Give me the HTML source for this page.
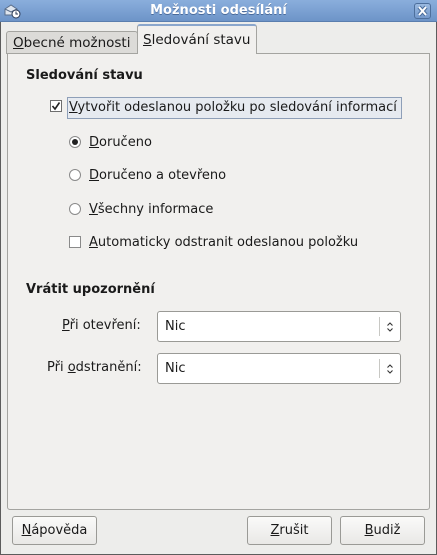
<!DOCTYPE html>
<html><head><meta charset="utf-8"><style>
*{margin:0;padding:0;box-sizing:border-box}
body{width:437px;height:555px;overflow:hidden;background:#ededeb;font-family:"DejaVu Sans","Liberation Sans",sans-serif;font-size:13px;color:#1a1a1a;position:relative}
.a{position:absolute}
.win{left:0;top:0;width:437px;height:555px;border:1px solid #5c5c5c;border-top:none}
.title{left:0;top:0;width:437px;height:22px;background:linear-gradient(#8aaedc,#6d94c8);border-bottom:1px solid #5a7eae;color:#fff;font-weight:bold;text-align:center;line-height:22px;font-size:13px;text-shadow:0 1px 0 #4a6a9a}
.close{left:414px;top:3px;width:17px;height:16px;border:1px solid #4d6f9c;border-radius:3px;background:linear-gradient(#9ab9e0,#7499cc)}
.panel{left:7px;top:53px;width:423px;height:457px;border:1px solid #a4a4a0;border-radius:0 0 3px 3px;background:#f1f0ee}
.tab1{left:6px;top:31px;width:132px;height:23px;border:1px solid #a4a4a0;border-bottom:none;border-radius:3px 3px 0 0;background:#dcdbd8;padding:3px 0 0 6px;font-size:13.5px}
.tab2{left:137px;top:24px;width:120px;height:30px;border:1px solid #a4a4a0;border-top:2px solid #8aa6cc;border-bottom:none;border-radius:3px 3px 0 0;background:#f1f0ee;padding:6px 0 0 5px;font-size:13.5px}
u{text-decoration:underline}
.b{font-weight:bold}
.cb{width:12px;height:12px;border:1px solid #6e6e6e;background:#fff}
.rb{width:12px;height:12px;border:1px solid #8a8a8a;border-radius:50%;background:#fff}
.combo{width:244px;height:31px;border:1px solid #9a9a96;border-radius:3px;background:#fff;padding:7px 0 0 7px}
.combo .sep{position:absolute;right:20px;top:5px;width:1px;height:19px;background:#c8c8c4}
.combo svg{position:absolute;right:6px;top:9px}
.btn{height:29px;border:1px solid #9a9a96;border-radius:3px;background:linear-gradient(#fafaf9,#e9e8e6);text-align:center;line-height:27px}
</style></head><body>
<div class="a win"></div>
<div class="a title">Možnosti odesílání</div>
<svg class="a" style="left:3px;top:3px" width="18" height="16" viewBox="0 0 18 16"><path d="M2 6 L8 2 L14 6 V12 H2Z" fill="#dfe6ef" stroke="#5a6e8a"/><path d="M2 6 L8 9 L14 6" fill="none" stroke="#5a6e8a"/><circle cx="13" cy="11" r="4" fill="#fff" stroke="#2a3a55"/><path d="M13 8.5V11H15" stroke="#2a3a55" fill="none"/></svg>
<div class="a close"><svg width="15" height="14" viewBox="0 0 15 14"><path d="M4 3 L11 11 M11 3 L4 11" stroke="#4d6f9c" stroke-width="4"/><path d="M4 3 L11 11 M11 3 L4 11" stroke="#fff" stroke-width="2"/></svg></div>
<div class="a tab1"><u>O</u>becné možnosti</div>
<div class="a panel"></div>
<div class="a tab2"><u>S</u>ledování stavu</div>
<div class="a b" style="left:26px;top:68px">Sledování stavu</div>
<div class="a cb" style="left:50px;top:100px"><svg width="10" height="10" viewBox="0 0 10 10" style="display:block"><path d="M1.5 5 L4 8 L8.5 1.5" stroke="#222" stroke-width="1.6" fill="none"/></svg></div>
<div class="a" style="left:67px;top:97px;width:335px;height:22px;border:1px solid #8e9fb8;background:#e6eaf0;padding:2px 0 0 1px"><u>V</u>ytvořit odeslanou položku po sledování informací</div>
<div class="a rb" style="left:69px;top:136px"><div style="width:6px;height:6px;margin:2px;border-radius:50%;background:#222"></div></div>
<div class="a" style="left:89px;top:135px"><u>D</u>oručeno</div>
<div class="a rb" style="left:69px;top:169px"></div>
<div class="a" style="left:89px;top:168px"><u>D</u>oručeno a otevřeno</div>
<div class="a rb" style="left:69px;top:203px"></div>
<div class="a" style="left:89px;top:202px"><u>V</u>šechny informace</div>
<div class="a cb" style="left:69px;top:236px;border-color:#8a8a8a"></div>
<div class="a" style="left:89px;top:235px"><u>A</u>utomaticky odstranit odeslanou položku</div>
<div class="a b" style="left:26px;top:282px">Vrátit upozornění</div>
<div class="a" style="left:62px;top:318px"><u>P</u>ři otevření:</div>
<div class="a combo" style="left:157px;top:311px">Nic<div class="sep"></div><svg width="8" height="12" viewBox="0 0 8 12"><path d="M1.5 4.5 L4 2 L6.5 4.5 M1.5 7.5 L4 10 L6.5 7.5" stroke="#333" stroke-width="1.1" fill="none"/></svg></div>
<div class="a" style="left:47px;top:360px">Při <u>o</u>dstranění:</div>
<div class="a combo" style="left:157px;top:353px">Nic<div class="sep"></div><svg width="8" height="12" viewBox="0 0 8 12"><path d="M1.5 4.5 L4 2 L6.5 4.5 M1.5 7.5 L4 10 L6.5 7.5" stroke="#333" stroke-width="1.1" fill="none"/></svg></div>
<div class="a btn" style="left:12px;top:516px;width:85px"><u>N</u>ápověda</div>
<div class="a btn" style="left:247px;top:516px;width:85px"><u>Z</u>rušit</div>
<div class="a btn" style="left:340px;top:516px;width:85px"><u>B</u>udiž</div>
</body></html>
